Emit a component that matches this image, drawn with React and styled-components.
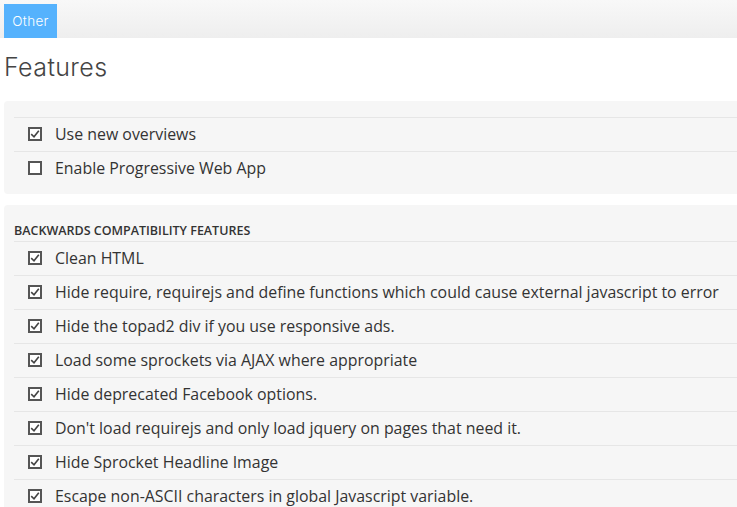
import React from "react";
import styled, { createGlobalStyle } from "styled-components";

const GlobalStyle = createGlobalStyle`
  html, body {
    margin: 0;
    padding: 0;
    background: #fff;
    overflow-x: hidden;
  }
  body {
    font-family: "Open Sans", "Liberation Sans", sans-serif;
    color: #333;
  }
`;

const mainFeatures = [
  { label: "Use new overviews", checked: true },
  { label: "Enable Progressive Web App", checked: false },
];

const compatFeatures = [
  "Clean HTML",
  "Hide require, requirejs and define functions which could cause external javascript to error",
  "Hide the topad2 div if you use responsive ads.",
  "Load some sprockets via AJAX where appropriate",
  "Hide deprecated Facebook options.",
  "Don't load requirejs and only load jquery on pages that need it.",
  "Hide Sprocket Headline Image",
  "Escape non-ASCII characters in global Javascript variable.",
];

const Checkbox = ({ checked }) => (
  <Box>
    {checked && (
      <svg width="10" height="10" viewBox="0 0 10 10">
        <path d="M1.2 5.2 L4 7.8 L8.8 1.8" fill="none" stroke="#444" strokeWidth="1.6" />
      </svg>
    )}
  </Box>
);

const App = () => {
  return (
    <>
      <GlobalStyle />
      <TabBar>
        <Tab>Other</Tab>
      </TabBar>
      <Title>Features</Title>
      <Panel $top>
        <List>
          {mainFeatures.map((f) => (
            <Row key={f.label}>
              <Checkbox checked={f.checked} />
              <span>{f.label}</span>
            </Row>
          ))}
        </List>
      </Panel>
      <Panel>
        <SectionHeading>Backwards compatibility features</SectionHeading>
        <List>
          {compatFeatures.map((label) => (
            <Row key={label}>
              <Checkbox checked />
              <span>{label}</span>
            </Row>
          ))}
        </List>
      </Panel>
    </>
  );
};

const TabBar = styled.div`
  height: 38px;
  padding-top: 4px;
  box-sizing: border-box;
  display: flex;
  align-items: stretch;
  background: linear-gradient(#f8f8f8, #eeeeee);
`;

const Tab = styled.div`
  width: 53px;
  margin-left: 4px;
  background: #55b2fd;
  color: #fff;
  font-family: "Inter", "Liberation Sans", sans-serif;
  font-weight: 300;
  font-size: 13.5px;
  letter-spacing: 0.3px;
  display: flex;
  align-items: center;
  justify-content: center;
`;

const Title = styled.h1`
  margin: 0;
  padding: 14px 0 0 4px;
  height: 63px;
  box-sizing: border-box;
  font-family: "Inter", "Liberation Sans", sans-serif;
  font-weight: 300;
  font-size: 25px;
  letter-spacing: 0.4px;
  color: #444;
`;

const Panel = styled.section`
  margin-left: 4px;
  background: #f6f6f6;
  border-radius: 4px 0 0 4px;
  padding: ${(p) => (p.$top ? "16px 0 9px 10px" : "17px 0 0 10px")};
  margin-bottom: 11px;
`;

const SectionHeading = styled.h2`
  margin: 0;
  padding-bottom: 1px;
  font-size: 12.5px;
  font-weight: 600;
  text-transform: uppercase;
  color: #333;
  line-height: 18px;
`;

const List = styled.div`
  display: flex;
  flex-direction: column;
`;

const Row = styled.div`
  height: 34px;
  box-sizing: border-box;
  border-top: 1px solid #e6e6e6;
  display: flex;
  align-items: center;
  padding-left: 14px;
  padding-bottom: 1px;
  gap: 13px;
  font-size: 15.9px;
  color: #333;
  white-space: nowrap;
`;

const Box = styled.span`
  width: 14px;
  height: 14px;
  box-sizing: border-box;
  border: 2px solid #555;
  background: #fff;
  display: inline-flex;
  align-items: center;
  justify-content: center;
  flex-shrink: 0;
`;

export default App;
